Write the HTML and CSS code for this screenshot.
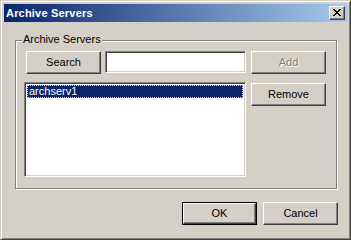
FILE: index.html
```html
<!DOCTYPE html>
<html>
<head>
<meta charset="utf-8">
<link rel="stylesheet" href="styles.css">
</head>
<body>
<div class="window">
  <div class="titlebar">
    <span class="title">Archive Servers</span>
    <span class="close">
      <svg width="8" height="7" viewBox="0 0 8 7" shape-rendering="crispEdges">
        <g fill="#000">
          <rect x="0" y="0" width="2" height="1"/><rect x="6" y="0" width="2" height="1"/>
          <rect x="1" y="1" width="2" height="1"/><rect x="5" y="1" width="2" height="1"/>
          <rect x="2" y="2" width="4" height="1"/>
          <rect x="3" y="3" width="2" height="1"/>
          <rect x="2" y="4" width="4" height="1"/>
          <rect x="1" y="5" width="2" height="1"/><rect x="5" y="5" width="2" height="1"/>
          <rect x="0" y="6" width="2" height="1"/><rect x="6" y="6" width="2" height="1"/>
        </g>
      </svg>
    </span>
  </div>
  <div class="client">
    <div class="group">
      <span class="group-label">Archive Servers</span>
      <div class="row row-top">
        <div class="btn">Search</div>
        <div class="textbox"></div>
        <div class="btn disabled">Add</div>
      </div>
      <div class="row row-list">
        <div class="listbox">
          <div class="item selected"><span class="focus">archserv1</span></div>
        </div>
        <div class="btn remove">Remove</div>
      </div>
    </div>
    <div class="footer">
      <div class="btn default"><span class="inner">OK</span></div>
      <div class="btn">Cancel</div>
    </div>
  </div>
</div>
</body>
</html>
```
FILE: styles.css
```css
html, body {
  margin: 0;
  padding: 0;
  background: #d4d0c8;
}
body {
  font-family: "Liberation Sans", Arial, sans-serif;
  font-size: 11px;
  color: #000;
}
.window {
  width: 351px;
  height: 240px;
  box-sizing: border-box;
  background: #d4d0c8;
  border: 1px solid;
  border-color: #d4d0c8 #404040 #404040 #d4d0c8;
  box-shadow: inset 1px 1px #fff, inset -1px -1px #808080;
  padding: 3px;
}
.titlebar {
  height: 18px;
  background: linear-gradient(to right, #0a246a, #a6caf0);
  display: flex;
  align-items: center;
  justify-content: space-between;
  padding: 0 2px 0 2px;
}
.title {
  color: #fff;
  font-weight: bold;
  font-size: 11px;
  letter-spacing: 0.2px;
}
.close {
  width: 16px;
  height: 14px;
  box-sizing: border-box;
  background: #d4d0c8;
  border: 1px solid;
  border-color: #fff #404040 #404040 #fff;
  box-shadow: inset -1px -1px #808080;
  display: flex;
  align-items: flex-start;
  justify-content: flex-start;
  padding: 2px 0 0 3px;
}
.close svg { display: block; }
.client {
  padding-top: 1px;
}
.group {
  position: relative;
  margin: 17px 10px 0 11px;
  height: 149px;
  box-sizing: border-box;
  border: 1px solid #808080;
  box-shadow: inset 1px 1px #fff, 1px 1px #fff;
  padding-top: 10px;
}
.group-label {
  position: absolute;
  top: -8px;
  left: 6px;
  padding: 0 1px;
  line-height: 13px;
  background: #d4d0c8;
}
.row {
  display: flex;
  align-items: flex-start;
}
.row-top {
  margin-left: 10px;
}
.row-list {
  margin-left: 8px;
  margin-top: 8px;
}
.btn {
  width: 75px;
  height: 23px;
  box-sizing: border-box;
  background: #d4d0c8;
  border: 1px solid;
  border-color: #fff #404040 #404040 #fff;
  box-shadow: inset -1px -1px #808080, inset 1px 1px #d4d0c8;
  display: flex;
  align-items: center;
  justify-content: center;
  line-height: 13px;
}
.btn.disabled {
  color: #808080;
  text-shadow: 1px 1px 0 #fff;
  margin-left: 5px;
}
.btn.remove {
  margin-left: 5px;
  margin-top: 1px;
}
.textbox {
  width: 141px;
  height: 22px;
  box-sizing: border-box;
  margin-left: 4px;
  background: #fff;
  border: 1px solid;
  border-color: #808080 #fff #fff #808080;
  box-shadow: inset 1px 1px #404040, inset -1px -1px #d4d0c8;
}
.listbox {
  width: 222px;
  height: 95px;
  box-sizing: border-box;
  background: #fff;
  border: 1px solid;
  border-color: #808080 #fff #fff #808080;
  box-shadow: inset 1px 1px #404040, inset -1px -1px #d4d0c8;
  padding: 2px 2px 0 2px;
}
.item {
  height: 13px;
  line-height: 13px;
}
.item.selected {
  background: #0a246a;
  color: #fff;
}
.focus {
  display: block;
  height: 13px;
  box-sizing: border-box;
  border: 1px dotted #f5db95;
  line-height: 11px;
  padding-left: 1px;
}
.footer {
  display: flex;
  justify-content: flex-end;
  gap: 6px;
  margin: 13px 9px 0 0;
}
.btn.default {
  border: 1px solid #000;
  box-shadow: none;
  padding: 0;
}
.btn.default .inner {
  flex: 1;
  align-self: stretch;
  display: flex;
  align-items: center;
  justify-content: center;
  border: 1px solid;
  border-color: #fff #404040 #404040 #fff;
  box-shadow: inset -1px -1px #808080;
}
```
